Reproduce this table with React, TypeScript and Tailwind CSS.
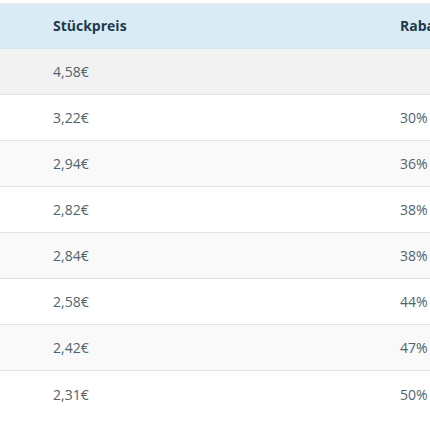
import React from 'react';

const rows = [
    { price: '4,58€', discount: '' },
    { price: '3,22€', discount: '30%' },
    { price: '2,94€', discount: '36%' },
    { price: '2,82€', discount: '38%' },
    { price: '2,84€', discount: '38%' },
    { price: '2,58€', discount: '44%' },
    { price: '2,42€', discount: '47%' },
    { price: '2,31€', discount: '50%' },
];

const rowBg = (i: number) => {
    if (i === 0) return 'bg-[#f2f2f2]';
    return i % 2 === 0 ? 'bg-[#f9f9f9]' : 'bg-white';
};

const App: React.FC = () => {
    return (
        <div className="w-[430px] h-[430px] overflow-hidden bg-white pt-[3px] font-['Open_Sans',sans-serif]">
            <div className="w-[520px]">
                <div className="grid grid-cols-[400px_120px] h-[46px] items-center bg-[#d9ecf6] border-b border-[#dde3e6]">
                    <div className="pl-[53px] text-[14px] font-bold text-[#1f3a48]">Stückpreis</div>
                    <div className="text-[14px] font-bold text-[#1f3a48]">Rabatt</div>
                </div>
                {rows.map((r, i) => (
                    <div
                        key={i}
                        className={`grid grid-cols-[400px_120px] h-[46px] items-center ${i < rows.length - 1 ? 'border-b border-[#e2e2e2]' : ''} ${rowBg(i)}`}
                    >
                        <div className="pl-[53px] text-[14px] text-[#52626d]">{r.price}</div>
                        <div className="text-[14px] text-[#52626d]">{r.discount}</div>
                    </div>
                ))}
            </div>
        </div>
    );
};

export default App;
